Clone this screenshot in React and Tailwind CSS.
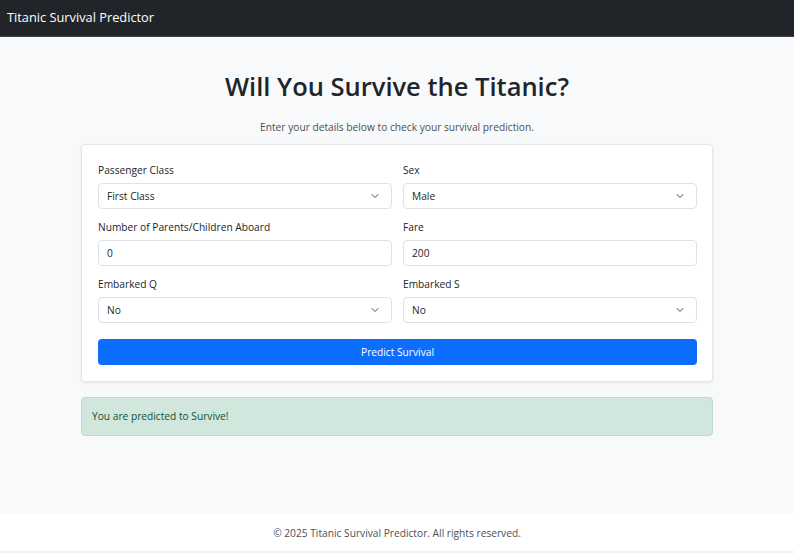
import { ChevronDown } from 'lucide-react';

const font = { fontFamily: '"Open Sans", "Noto Sans", sans-serif' };

function Field({ label, children }) {
  return (
    <div className="flex flex-col">
      <label className="text-[10.2px] text-[#212529] leading-[14px] mb-[6px]">{label}</label>
      {children}
    </div>
  );
}

function Select({ value }) {
  return (
    <div className="h-[26px] border border-[#dee2e6] rounded-[4px] bg-white flex items-center justify-between pl-[8px] pr-[10px]">
      <span className="text-[10.2px] text-[#212529]">{value}</span>
      <ChevronDown size={12} strokeWidth={1.8} className="text-[#343a40]" />
    </div>
  );
}

function Input({ value }) {
  return (
    <div className="h-[26px] border border-[#dee2e6] rounded-[4px] bg-white flex items-center px-[8px]">
      <span className="text-[10.2px] text-[#212529]">{value}</span>
    </div>
  );
}

export default function App() {
  return (
    <div className="min-h-[553px] flex flex-col bg-[#f8f9fa]" style={font}>
      <header className="h-[37px] bg-[#212529] flex items-center px-[7px] border-b border-[#3a3f44]">
        <span className="text-white text-[12.8px]">Titanic Survival Predictor</span>
      </header>

      <main className="flex-1 flex flex-col items-center">
        <h1 className="mt-[29px] text-[25.5px] font-semibold text-[#212529] leading-[40px]">Will You Survive the Titanic?</h1>
        <p className="mt-[14px] text-[10.2px] text-[#495057]">Enter your details below to check your survival prediction.</p>

        <div className="mt-[9px] w-[632px] bg-white border border-[#e3e6ea] rounded-[4px] shadow-[0_1px_3px_rgba(0,0,0,0.08)] pl-[16px] pr-[15px] pt-[18px] pb-[16px]">
          <div className="grid grid-cols-2 gap-x-[11px] gap-y-[11px]">
            <Field label="Passenger Class"><Select value="First Class" /></Field>
            <Field label="Sex"><Select value="Male" /></Field>
            <Field label="Number of Parents/Children Aboard"><Input value="0" /></Field>
            <Field label="Fare"><Input value="200" /></Field>
            <Field label="Embarked Q"><Select value="No" /></Field>
            <Field label="Embarked S"><Select value="No" /></Field>
          </div>
          <button className="mt-[16px] w-full h-[26px] bg-[#0d6efd] rounded-[4px] text-white text-[10.2px]">Predict Survival</button>
        </div>

        <div className="mt-[15px] w-[632px] h-[39px] bg-[#d1e7dd] border border-[#badbcc] rounded-[4px] flex items-center px-[10px]">
          <span className="text-[10.2px] text-[#0f5132]">You are predicted to Survive!</span>
        </div>
      </main>

      <footer className="h-[39px] bg-white flex items-center justify-center border-b-2 border-[#eef0f2]">
        <span className="text-[10.2px] text-[#495057] mt-[3px]">© 2025 Titanic Survival Predictor. All rights reserved.</span>
      </footer>
    </div>
  );
}
